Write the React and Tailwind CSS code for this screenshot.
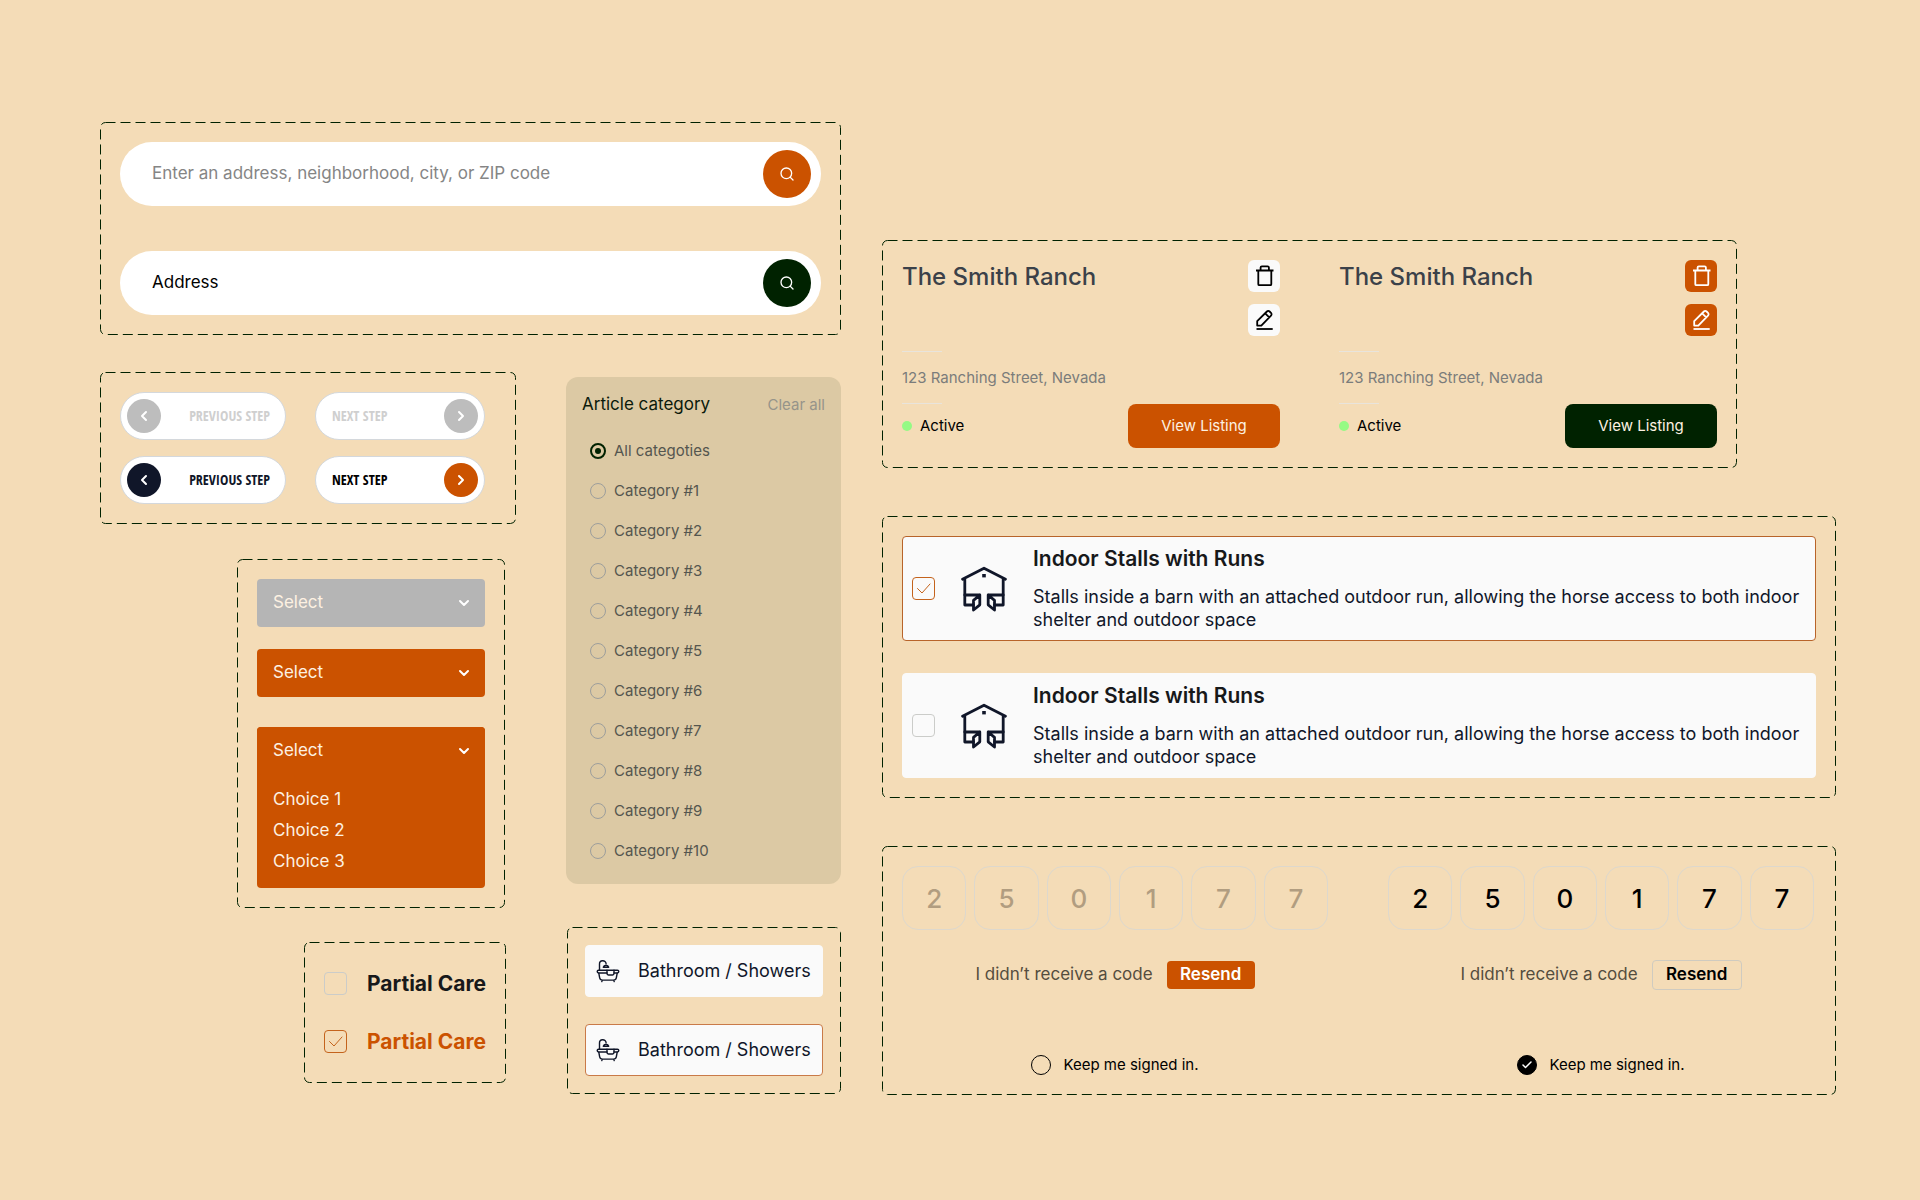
import React from 'react';
import { Check, ChevronDown, ChevronLeft, ChevronRight, Search } from 'lucide-react';

const categories = ['All categoties', ...Array.from({ length: 10 }, (_, i) => `Category #${i + 1}`)];
const choices = ['Choice 1', 'Choice 2', 'Choice 3'];
const code = ['2', '5', '0', '1', '7', '7'];

function Frame({ className, children }) {
  return (
    <section className={`relative ${className}`}>
      {/* Dashed outline */}
      <svg className="absolute inset-0 w-full h-full pointer-events-none" aria-hidden="true">
        <rect x="0.5" y="0.5" rx="5" className="w-[calc(100%-1px)] h-[calc(100%-1px)]" fill="none" stroke="#002200" strokeDasharray="10 5" />
      </svg>
      {children}
    </section>
  );
}

function SearchBar({ value, buttonColor }) {
  return (
    <form className="flex items-center h-16 pl-8 pr-[10px] rounded-full bg-white" onSubmit={e => e.preventDefault()}>
      <input
        type="text"
        aria-label="Address"
        defaultValue={value}
        placeholder="Enter an address, neighborhood, city, or ZIP code"
        className="flex-1 min-w-0 bg-transparent text-[17px] text-black placeholder:text-[#858585] outline-none"
      />
      <button type="submit" aria-label="Search" className={`flex items-center justify-center w-12 h-12 rounded-full text-white ${buttonColor}`}>
        <Search size={16} strokeWidth={2} />
      </button>
    </form>
  );
}

function StepButton({ direction, disabled, textColor, circleColor }) {
  const prev = direction === 'prev';
  const Icon = prev ? ChevronLeft : ChevronRight;
  return (
    <button
      disabled={disabled}
      className={`flex items-center justify-between h-12 border border-[#d4d8dc] rounded-full bg-white ${prev ? 'pl-[6px] pr-[15px]' : 'flex-row-reverse pl-4 pr-[6px]'}`}
    >
      <span className={`flex items-center justify-center w-[34px] h-[34px] rounded-full text-white ${circleColor}`}>
        <Icon size={16} strokeWidth={3} />
      </span>
      <span className={`font-['Open_Sans_Condensed','Roboto_Condensed',sans-serif] text-sm whitespace-nowrap ${textColor}`}>
        {prev ? 'PREVIOUS STEP' : 'NEXT STEP'}
      </span>
    </button>
  );
}

function SelectBox({ disabled, color }) {
  return (
    <div className={`relative rounded ${color}`}>
      <select aria-label="Select" disabled={disabled} defaultValue="" className="block w-full h-12 pl-4 pr-10 appearance-none bg-transparent text-[17px] text-[#fdf1e2] opacity-100 outline-none">
        <option value="">Select</option>
        {choices.map(c => <option key={c}>{c}</option>)}
      </select>
      <ChevronDown size={16} strokeWidth={3} className="absolute right-[13px] top-4 text-white pointer-events-none" />
    </div>
  );
}

function CheckBox({ id, checked }) {
  return (
    <span className="relative block w-[23px] h-[23px] shrink-0">
      <input
        id={id}
        type="checkbox"
        defaultChecked={checked}
        className="peer block w-full h-full appearance-none rounded border border-[#cbccc9] checked:border-[#c4631c]"
      />
      <svg viewBox="0 0 23 23" className="absolute inset-0 hidden peer-checked:block pointer-events-none" fill="none" stroke="#c4631c" strokeLinecap="round" strokeLinejoin="round">
        <path d="M5.5 11.5l4.5 4.5l8-9" />
      </svg>
    </span>
  );
}

function PartialCare({ id, checked }) {
  return (
    <div className="flex items-center gap-5 h-[23px]">
      <CheckBox id={id} checked={checked} />
      <label htmlFor={id} className={`text-[21px] font-bold whitespace-nowrap ${checked ? 'text-[#cb5200]' : 'text-[#17181a]'}`}>
        Partial Care
      </label>
    </div>
  );
}

function BathIcon() {
  return (
    <svg viewBox="0 0 24 24" className="w-6 h-6 shrink-0" fill="none" stroke="currentColor" strokeWidth="1.4" strokeLinecap="round" strokeLinejoin="round">
      <path d="M3.5 11.2V5.2a3.3 3.3 0 0 1 6.6-.4" />
      <path d="M7.3 8.3a2.8 2.8 0 0 1 5.4 0z" />
      <path d="M11 11.2H2.6a1.4 1.4 0 0 0 0 2.8H11M18 11.2h3.4a1.4 1.4 0 0 1 0 2.8H18" />
      <path d="M11 11.2h7v3.4a1.4 1.4 0 0 1-1.4 1.4h-4.2a1.4 1.4 0 0 1-1.4-1.4z" />
      <path d="M2.8 14.2l.8 4.3a3 3 0 0 0 3 2.6h10.8a3 3 0 0 0 3-2.6l.8-4.3M6.2 21.2l-.4 1.4M17.8 21.2l.4 1.4" />
    </svg>
  );
}

function BathroomButton({ color }) {
  return (
    <button className={`flex items-center gap-[18px] h-[52px] pl-[10px] border rounded bg-[#fafafa] text-[#101629] text-lg whitespace-nowrap ${color}`}>
      <BathIcon />
      Bathroom / Showers
    </button>
  );
}

function TrashIcon() {
  return (
    <svg viewBox="0 0 32 32" className="w-8 h-8" fill="none" stroke="currentColor" strokeWidth="1.8" strokeLinejoin="round">
      <path d="M8 10.5h17.5M12.6 10.2V7.6a1.3 1.3 0 0 1 1.3-1.3h5.7a1.3 1.3 0 0 1 1.3 1.3v2.6M10.3 10.8v13.4a1 1 0 0 0 1 1h11a1 1 0 0 0 1-1V10.8" />
    </svg>
  );
}

function PenIcon() {
  return (
    <svg viewBox="0 0 32 32" className="w-8 h-8" fill="none" stroke="currentColor" strokeWidth="1.8" strokeLinejoin="round">
      <path d="M9.2 21.6v-4.4l9.7-9.7a1.9 1.9 0 0 1 2.7 0l1.4 1.4a1.9 1.9 0 0 1 0 2.7l-9.7 10zM17.2 9.4l4 4" />
      <path d="M8.5 25h16.2" />
    </svg>
  );
}

function RanchCard({ iconColor, buttonColor }) {
  return (
    <article>
      <div className="flex justify-between">
        <h2 className="pt-px text-2xl font-medium text-[#3b4149]">The Smith Ranch</h2>
        <div className="flex flex-col gap-3">
          <button aria-label="Delete" className={`w-8 h-8 rounded-md ${iconColor}`}><TrashIcon /></button>
          <button aria-label="Edit" className={`w-8 h-8 rounded-md ${iconColor}`}><PenIcon /></button>
        </div>
      </div>
      <div className="w-10 h-px mt-[15px] bg-[#e8e4dc]" />
      <p className="mt-4 mb-[15px] text-[15px] leading-5 text-[#7b7c7b]">123 Ranching Street, Nevada</p>
      <div className="w-10 h-px bg-[#e8e4dc]" />
      <div className="flex items-center justify-between">
        <div className="flex items-center gap-2 text-[15px] text-black">
          <span className="w-[10px] h-[10px] rounded-full bg-[#95fa84]" />
          Active
        </div>
        <button className={`w-[152px] h-11 rounded-lg text-[15px] text-[#fdf1e2] ${buttonColor}`}>View Listing</button>
      </div>
    </article>
  );
}

function StallIcon() {
  return (
    <svg viewBox="0 0 48 48" className="w-12 h-12 shrink-0" fill="none" stroke="#101629" strokeWidth="2.8" strokeLinecap="round" strokeLinejoin="round">
      <path d="M2.5 14.2L24 3.2l21.5 11M4.8 14v26h8.7M43.2 14v26h-8.7" />
      <path d="M4.8 30h15v9.8l-6.3 5.2v-9.600l6.300-5.400M43.200 30h-15v9.800l6.300 5.200v-9.600l-6.300-5.400" />
      <path d="M22.2 9h3.6v3.400h-3.600z" fill="#101629" stroke="none" />
    </svg>
  );
}

function StallOption({ id, checked }) {
  return (
    <div className={`flex items-center gap-[25px] pl-[9px] pr-3 border rounded bg-[#fafafa] ${checked ? 'border-[#b8642a]' : 'border-[#fafafa]'}`}>
      <CheckBox id={id} checked={checked} />
      <StallIcon />
      <label htmlFor={id} className="block pt-2 pb-[9px]">
        <span className="block text-[21px] leading-7 font-semibold text-[#17181a]">Indoor Stalls with Runs</span>
        <span className="block mt-3 text-lg leading-[23px] text-[#101629]">
          Stalls inside a barn with an attached outdoor run, allowing the horse access to both indoor shelter and outdoor space
        </span>
      </label>
    </div>
  );
}

function CodeForm({ id, filled }) {
  return (
    <div>
      <div className="grid grid-cols-6 gap-2">
        {code.map((digit, i) => (
          <input
            key={i}
            type="text"
            maxLength={1}
            aria-label={`Digit ${i + 1}`}
            defaultValue={filled ? digit : ''}
            placeholder={digit}
            className="w-full h-16 rounded-2xl border border-[#ddd8cd] bg-transparent text-center text-[26px] font-medium text-black placeholder:text-[#b19d80] placeholder:opacity-100 outline-none"
          />
        ))}
      </div>
      <div className="flex items-center justify-center gap-[14px] h-[30px] mt-[30px] text-[17px]">
        <span className="text-[#554d3e]">I didn’t receive a code</span>
        <button className={`rounded font-semibold ${filled ? 'w-[90px] h-[30px] border border-[#cfcbc0] text-black' : 'w-[88px] h-7 bg-[#cb5200] text-white'}`}>
          Resend
        </button>
      </div>
      <div className="flex items-center justify-center gap-3 h-5 mt-[65px]">
        <span className="relative block w-5 h-5">
          <input id={id} type="checkbox" defaultChecked={filled} className="peer block w-full h-full appearance-none rounded-full border border-black checked:bg-black" />
          <Check size={12} strokeWidth={3} className="absolute left-1 top-1 hidden peer-checked:block text-white pointer-events-none" />
        </span>
        <label htmlFor={id} className="text-[15px] text-black">Keep me signed in.</label>
      </div>
    </div>
  );
}

export default function App() {
  return (
    <main className="grid grid-cols-[741fr_954fr] gap-[41px] items-start min-h-screen pt-[122px] pb-[104px] pl-[100px] pr-[84px] bg-[#f4dcb7] font-['Inter','Liberation_Sans',sans-serif]">
      <div>
        <Frame className="flex flex-col gap-[45px] p-5">
          <SearchBar buttonColor="bg-[#cb5200]" />
          <SearchBar value="Address" buttonColor="bg-[#002200]" />
        </Frame>

        <div className="grid grid-cols-[1fr_275px] gap-[50px] mt-[37px]">
          <div className="flex flex-col items-end">
            <Frame className="grid grid-cols-[166px_170px] gap-x-[29px] gap-y-4 w-full p-5">
              <StepButton direction="prev" disabled textColor="text-[#cfcfcf]" circleColor="bg-[#bdbdbd]" />
              <StepButton direction="next" disabled textColor="text-[#cfcfcf]" circleColor="bg-[#bdbdbd]" />
              <StepButton direction="prev" textColor="text-[#101629]" circleColor="bg-[#101629]" />
              <StepButton direction="next" textColor="text-black" circleColor="bg-[#cb5200]" />
            </Frame>

            <Frame className="w-[268px] mt-[35px] mr-[11px] p-5">
              <SelectBox disabled color="bg-[#b5b5b5]" />
              <div className="mt-[22px]">
                <SelectBox color="bg-[#cb5200]" />
              </div>
              <div className="mt-[30px] pb-[11px] rounded bg-[#cb5200]">
                <SelectBox color="bg-[#cb5200]" />
                <ul className="mt-[9px]">
                  {choices.map(c => (
                    <li key={c}>
                      <button className="block w-full h-[31px] pl-4 text-left text-[17px] text-[#fdf1e2]">{c}</button>
                    </li>
                  ))}
                </ul>
              </div>
            </Frame>

            <Frame className="flex flex-col gap-[35px] mt-[34px] mr-[10px] px-5 py-[30px]">
              <PartialCare id="partial-off" />
              <PartialCare id="partial-on" checked />
            </Frame>
          </div>

          <div>
            <fieldset className="mt-[5px] pt-4 pb-[13px] px-4 rounded-xl bg-[#dcc9a4]">
              <div className="flex items-center justify-between h-6 mb-[14px]">
                <h2 className="text-[17px] text-[#0b1a0b]">Article category</h2>
                <button className="text-[15px] text-[#96948a]">Clear all</button>
              </div>
              {categories.map((name, i) => (
                <label key={name} className="flex items-center gap-2 h-10 pl-2 text-[15px] text-[#55564f]">
                  <span className="relative block w-4 h-4">
                    <input type="radio" name="category" defaultChecked={i === 0} className="peer block w-full h-full appearance-none rounded-full border border-[#9d9e9c] checked:border-2 checked:border-[#002200]" />
                    <span className="absolute left-[5px] top-[5px] hidden peer-checked:block w-[6px] h-[6px] rounded-full bg-[#002200]" />
                  </span>
                  {name}
                </label>
              ))}
            </fieldset>

            <Frame className="flex flex-col gap-[27px] mt-[43px] ml-px p-[18px]">
              <BathroomButton color="border-[#fafafa]" />
              <BathroomButton color="border-[#c97a48]" />
            </Frame>
          </div>
        </div>
      </div>

      <div className="pt-[118px]">
        <Frame className="grid grid-cols-2 gap-[59px] mr-[99px] p-5">
          <RanchCard iconColor="bg-[#fafafa] text-black" buttonColor="bg-[#cb5200]" />
          <RanchCard iconColor="bg-[#cb5200] text-white" buttonColor="bg-[#002200]" />
        </Frame>

        <Frame className="flex flex-col gap-8 mt-12 p-5">
          <StallOption id="stall-on" checked />
          <StallOption id="stall-off" />
        </Frame>

        <Frame className="grid grid-cols-2 gap-[60px] mt-12 pl-5 pr-[22px] py-5">
          <CodeForm id="keep-off" />
          <CodeForm id="keep-on" filled />
        </Frame>
      </div>
    </main>
  );
}
